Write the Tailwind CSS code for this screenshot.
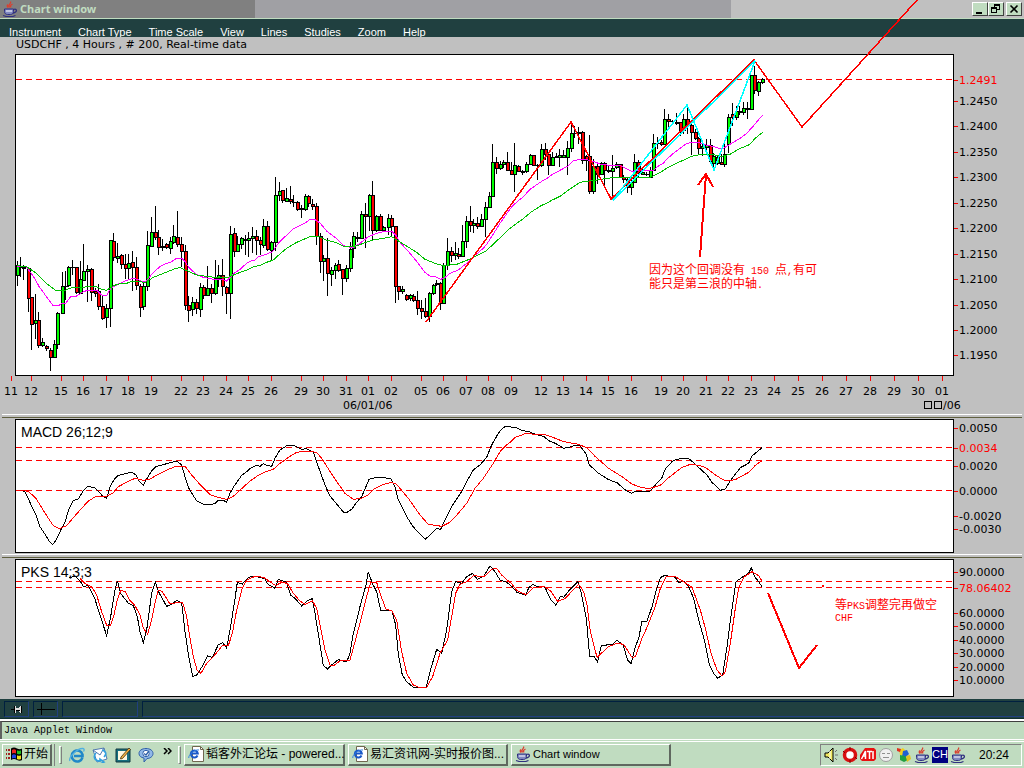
<!DOCTYPE html>
<html lang="zh">
<head>
<meta charset="utf-8">
<title>Chart window</title>
<script src="https://cdn.jsdelivr.net/npm/@tailwindcss/browser@4"></script>
</head>
<body class="flex min-h-screen flex-col overflow-x-hidden bg-[#c0dcc0] font-['Liberation_Sans','Noto_Sans_CJK_SC',sans-serif] text-black">

<svg class="hidden" aria-hidden="true">
  <symbol id="java" viewBox="0 0 16 16">
    <path d="M8.5 0.5c1.5 2-3.5 3-1 6M10.5 3c-2 1-2.5 2-1.500 3.500M6 3.500c-1 1-1 2 0 3" fill="none" stroke="#d84030" stroke-width="1.300"/>
    <path d="M2.500 8h9v2.500c0 2-1.500 3-3 3h-3c-1.500 0-3-1-3-3z" fill="#8088c0" stroke="#303080" stroke-width="1"/>
    <path d="M4 10h6" stroke="#fff" stroke-width="1"/>
    <path d="M11.500 8.500c4-1.500 4 3-0.500 3.500M1 14.500c4 1.500 9 1.500 12.500 0" fill="none" stroke="#303080" stroke-width="1.300"/>
  </symbol>
  <symbol id="ie" viewBox="0 0 16 16">
    <path d="M13.500 10.500A5.500 5.500 0 1 1 13.500 7.500V9H5" fill="none" stroke="#2088c8" stroke-width="2.600"/>
    <path d="M1 14C-1 11 8 1 14 1.500c2 .5 1 2 .5 3" fill="none" stroke="#50b0e0" stroke-width="1.300"/>
  </symbol>
  <symbol id="iepage" viewBox="0 0 16 16">
    <path d="M4.500.5h8l3 3v12h-11z" fill="#fff" stroke="#706850"/>
    <path d="M12.500.5v3h3" fill="none" stroke="#706850"/>
    <path d="M9.500 9.500A3.500 3.500 0 1 1 9.800 7.500H3.500" fill="none" stroke="#1858c8" stroke-width="2"/>
    <path d="M.8 12C0 9 7 3 11 4" fill="none" stroke="#3080e0"/>
  </symbol>
</svg>

<header class="flex h-[19px] items-center border-b border-[#c0dcc0] bg-[linear-gradient(90deg,#808080_24.9%,#a0a0a4_24.9%,#a0a0a4_71.4%,#c0c0c0_71.4%)] pl-[2px] pr-[2px]">
  <svg class="size-4" aria-hidden="true"><use href="#java"/></svg>
  <h1 class="ml-[2px] flex-1 font-['Noto_Sans'] text-[11px] font-bold leading-4 text-[#c0dcc0]">Chart window</h1>
  <div class="flex">
    <button aria-label="Minimize" class="h-[14px] w-4 border border-t-white border-l-white border-r-[#404040] border-b-[#404040] bg-[#c0dcc0]"><svg viewBox="0 0 14 12" class="block h-3 w-[14px]"><path d="M3 9h6v2H3z"/></svg></button>
    <button aria-label="Restore" class="h-[14px] w-4 border border-t-white border-l-white border-r-[#404040] border-b-[#404040] bg-[#c0dcc0]"><svg viewBox="0 0 14 12" class="block h-3 w-[14px]" fill="none" stroke="#000" shape-rendering="crispEdges"><path d="M5.500 4V1.500h5v5H8M5 2.500h6M2.500 4.500h5v5h-5zM2 5.500h6"/></svg></button>
    <button aria-label="Close" class="ml-[2px] h-[14px] w-4 border border-t-white border-l-white border-r-[#404040] border-b-[#404040] bg-[#c0dcc0]"><svg viewBox="0 0 14 12" class="block h-3 w-[14px]"><path d="M3.500 2.500l7 7M10.500 2.500l-7 7" stroke="#000" stroke-width="1.600"/></svg></button>
  </div>
</header>

<nav class="flex h-[18px] items-end gap-[17px] overflow-hidden bg-[#204040] px-[9px] text-[11px] leading-[9px] text-white">
  <button>Instrument</button><button>Chart Type</button><button>Time Scale</button><button>View</button><button>Lines</button><button>Studies</button><button>Zoom</button><button>Help</button>
</nav>

<main class="relative bg-[#c0c0c0] font-['DejaVu_Sans',sans-serif]">
  <svg id="price" class="relative block h-auto w-full overflow-visible text-[11px]" viewBox="0 37 1024 377" role="img" aria-label="USDCHF price chart">
    <text x="16" y="48">USDCHF , 4 Hours , # 200, Real-time data</text>
    <rect x="15.500" y="54.500" width="938" height="321" fill="#fff" stroke="#000" shape-rendering="crispEdges"/>
    <path d="M16 79.500h937" stroke="#f00" stroke-dasharray="6 4" shape-rendering="crispEdges"/>
    <g id="candles" shape-rendering="crispEdges"></g>
    <g fill="none" shape-rendering="crispEdges">
      <g transform="translate(0 170) scale(.33333)">
        <polyline vector-effect="non-scaling-stroke" stroke="#f0f" points="51,289 78,289 84,297 104,325 118,351 132,370 160,408 173,408 186,401 196,401 212,380 230,378 250,365 263,361 290,361 305,375 320,376 333,354 353,343 380,331 398,325 412,328 430,336 440,333 460,307 480,290 500,280 512,277 530,265 545,265 556,276 566,292 590,314 610,322 634,327 670,328 679,334 690,322 702,310 720,298 740,280 750,274"/>
        <polyline vector-effect="non-scaling-stroke" stroke="#00c000" points="51,287 80,290 90,297 108,309 140,341 167,361 195,361 212,354 240,354 263,349 288,349 305,358 320,361 340,347 360,341 380,340 395,334 420,335 435,338 460,322 490,310 520,298 540,292 556,300 590,315 620,319 660,324 680,324 705,313 740,300 750,295"/>
      </g>
      <g transform="translate(250 160) scale(.33333)">
        <polyline vector-effect="non-scaling-stroke" stroke="#f0f" points="0,304 15,300 25,290 40,286 60,278 68,275 85,250 100,235 130,206 150,197 167,188 180,178 194,178 210,189 230,213 260,236 285,260 310,262 330,250 355,230 380,220 405,214 425,214 437,225 450,247 480,280 500,304 525,337 540,348 555,349 572,358 583,354 600,340 625,330 650,310 670,290 700,265 712,250 730,222 750,190 778,150"/>
        <polyline vector-effect="non-scaling-stroke" stroke="#00c000" points="0,325 15,319 30,317 50,307 70,300 85,286 110,265 140,247 180,230 205,229 230,241 260,248 285,261 310,261 340,250 370,240 400,235 425,230 450,246 500,277 525,298 560,312 580,317 620,313 665,295 708,273 740,243 780,205"/>
      </g>
      <g transform="translate(480 50) scale(.33333)">
        <polyline vector-effect="non-scaling-stroke" stroke="#f0f" points="88,480 100,465 130,440 150,418 185,394 200,386 220,371 240,361 262,349 280,333 297,328 315,328 340,334 360,342 380,345 420,346 435,354 455,364 475,361 505,363 520,361 535,348 550,340 560,328 580,310 600,295 620,280 640,277 655,277 680,286 700,289 725,298 745,286 760,277 780,265 800,250 820,228 848,195"/>
        <polyline vector-effect="non-scaling-stroke" stroke="#00c000" points="90,535 127,508 155,485 185,466 200,460 215,451 240,439 260,424 300,397 320,394 350,390 380,385 400,383 440,382 510,382 545,365 560,355 600,335 635,319 660,314 700,314 725,319 750,313 775,298 810,283 825,265 848,247"/>
      </g>
    </g>
    <g fill="none" stroke-width="1.500" shape-rendering="crispEdges">
      <path d="M426 322L571 122L611 199L754 60L802 127L918-1" stroke="#f00"/>
      <path d="M613 200L687 105L714 170L755 61L613 200" stroke="#0ff"/>
      <path d="M700 257L706 174M698 185L706 174L713 187" stroke="#f00" stroke-width="2"/>
    </g>
    <g class="fill-[#f00] font-['Noto_Sans_CJK_SC',sans-serif] text-[12px]">
      <text x="649" y="274" xml:space="preserve">因为这个回调没有<tspan class="font-['Liberation_Mono'] text-[10px]"> 150 </tspan>点<tspan class="font-['Liberation_Mono'] text-[10px]">,</tspan>有可</text>
      <text x="649" y="288">能只是第三浪的中轴<tspan class="font-['Liberation_Mono'] text-[10px]">.</tspan></text>
    </g>
    <text x="343" y="409">06/01/06</text>
    <g fill="none" stroke="#000" shape-rendering="crispEdges"><path d="M924.500 401.500h7v7h-7zM934.500 401.500h7v7h-7z"/></g>
    <text x="943" y="409">/06</text>
  </svg>

  <div role="separator" class="mx-[2px] h-1 border-t border-b border-t-white border-b-[#606040]"></div>

  <svg id="macd" class="block h-auto w-full text-[11px]" viewBox="0 418 1024 136" role="img" aria-label="MACD">
    <rect x="15.500" y="419.500" width="938" height="133" fill="#fff" stroke="#000" shape-rendering="crispEdges"/>
    <path d="M16 447.500h937M16 460.500h937M16 490.500h937" stroke="#f00" stroke-dasharray="6 4" shape-rendering="crispEdges"/>
    <text x="21" y="437" class="font-['Liberation_Sans'] text-[14px]">MACD 26;12;9</text>
    <g fill="none" shape-rendering="crispEdges">
      <g transform="translate(0 370) scale(.33333)">
        <polyline vector-effect="non-scaling-stroke" stroke="#000" points="48,361 65,361 74,365 85,385 95,410 110,440 120,470 135,493 150,517 158,523 165,515 175,497 185,474 195,457 205,422 220,392 235,387 250,362 263,349 285,354 300,368 308,379 320,385 330,350 345,325 355,316 375,311 395,306 408,315 415,330 430,346 440,327 455,303 468,290 500,281 530,273 545,285 555,320 565,352 590,393 610,402 630,405 645,400 655,391 670,391 680,397 690,370 700,352 725,316 740,305 750,295 770,286 780,289 790,281 800,286 815,289 825,265 840,240 862,226 885,228 905,238 920,236 940,247 955,290 975,345 990,378 1010,402 1030,426 1040,428 1055,418 1070,397 1085,380 1100,345 1107,328 1130,322 1172,325 1185,350 1195,390 1220,440 1240,471 1276,508 1310,475 1322,478 1335,450 1355,410 1385,365 1400,335 1420,300 1440,285 1460,262 1475,225 1495,190 1510,172 1525,168 1536,172"/>
        <polyline vector-effect="non-scaling-stroke" stroke="#f00" points="48,361 65,361 85,364 108,385 125,413 145,445 160,467 178,476 200,467 220,443 245,415 265,393 285,381 320,379 340,368 355,350 385,334 405,325 430,331 450,327 475,313 500,300 530,288 555,289 575,315 605,349 630,374 655,382 680,388 700,379 725,356 750,333 775,316 800,304 820,298 835,284 870,259 890,247 920,243 950,247 965,265 1000,320 1035,370 1060,388 1085,385 1105,375 1120,358 1150,343 1175,337 1190,343 1225,385 1260,435 1285,463 1325,469 1350,457 1375,430 1400,400 1425,355 1450,325 1480,280 1500,245 1520,225 1536,212"/>
      </g>
      <g transform="translate(512 370) scale(.33333)">
        <polyline vector-effect="non-scaling-stroke" stroke="#000" points="0,172 15,174 30,181 50,185 75,194 95,199 110,212 130,220 155,235 175,231 190,225 205,228 222,252 232,285 260,310 290,329 315,338 340,360 358,370 370,364 415,363 430,345 450,323 460,297 480,275 490,269 510,265 530,266 545,278 565,297 585,315 600,337 625,361 640,357 655,332 685,293 710,280 720,258 750,233"/>
        <polyline vector-effect="non-scaling-stroke" stroke="#f00" points="0,212 10,202 40,191 100,194 130,205 155,215 200,223 225,234 250,260 290,295 330,320 360,342 380,350 410,356 445,346 470,323 510,292 535,283 560,286 580,292 610,315 640,333 670,329 710,307 730,286 750,272"/>
      </g>
    </g>
  </svg>

  <div role="separator" class="mx-[2px] h-1 border-t border-b border-t-white border-b-[#606040]"></div>

  <svg id="pks" class="block h-auto w-full text-[11px]" viewBox="0 558 1024 141" role="img" aria-label="PKS">
    <rect x="15.500" y="559.500" width="938" height="137" fill="#fff" stroke="#000" shape-rendering="crispEdges"/>
    <path d="M16 581.500h937M16 587.500h937" stroke="#f00" stroke-dasharray="6 4" shape-rendering="crispEdges"/>
    <text x="21" y="577" class="font-['Liberation_Sans'] text-[14px]">PKS 14;3;3</text>
    <g fill="none" shape-rendering="crispEdges">
      <g transform="translate(0 550) scale(.33333)">
        <polyline vector-effect="non-scaling-stroke" stroke="#000" points="208,84 225,78 240,92 250,110 265,106 285,148 300,195 320,257 332,200 345,120 352,92 362,130 385,160 400,167 412,200 420,245 430,278 440,240 455,130 466,97 478,130 500,169 515,163 530,151 545,158 555,245 567,325 578,380 590,375 605,352 623,318 637,322 655,284 668,278 680,294 690,240 703,160 712,97 727,102 745,82 765,79 795,86 803,102 825,115 835,88 860,97 872,135 885,145 905,168 922,152 937,146 945,190 957,265 970,347 983,357 995,345 1015,329 1040,336 1050,310 1060,250 1080,170 1098,105 1105,65 1117,100 1130,125 1142,181 1175,180 1187,225 1195,315 1207,375 1220,395 1242,414 1278,414 1290,365 1310,298 1325,310 1340,240 1355,125 1367,95 1385,100 1400,80 1418,70 1432,88 1452,78 1470,48 1485,65 1500,90 1520,97 1536,110"/>
        <polyline vector-effect="non-scaling-stroke" stroke="#f00" points="240,85 255,100 275,110 290,135 305,185 320,226 332,226 342,195 352,150 362,122 375,124 390,152 405,167 420,195 430,235 443,252 455,210 465,160 475,120 487,125 510,162 530,158 548,158 560,200 570,265 580,320 592,362 603,370 620,340 640,320 667,287 685,287 697,250 710,180 725,120 740,90 765,79 790,82 810,95 827,107 845,97 862,100 880,130 900,153 915,163 937,152 950,175 962,235 975,300 990,345 1000,348 1020,333 1050,330 1065,275 1085,200 1100,140 1112,97 1130,97 1142,135 1158,178 1175,182 1190,210 1205,305 1220,370 1240,405 1262,414 1280,412 1298,380 1320,310 1343,270 1355,200 1367,130 1380,103 1400,95 1420,77 1452,80 1475,58 1490,55 1505,75 1525,93 1536,102"/>
      </g>
      <g transform="translate(512 550) scale(.33333)">
        <polyline vector-effect="non-scaling-stroke" stroke="#000" points="0,110 15,127 42,136 50,113 63,103 75,109 98,110 115,147 132,166 145,139 155,142 175,117 198,95 208,130 223,205 233,320 245,318 257,336 268,286 300,284 315,271 333,284 347,331 357,341 370,290 380,265 390,214 405,214 420,170 433,120 445,83 458,76 490,82 500,98 515,94 530,110 545,145 560,210 577,270 592,345 605,370 617,385 632,375 645,290 658,190 672,95 690,82 710,70 718,53 728,80 740,95 750,110"/>
        <polyline vector-effect="non-scaling-stroke" stroke="#f00" points="0,102 15,122 42,134 65,113 95,109 115,122 137,154 160,145 185,118 200,103 215,125 225,165 235,245 255,322 270,308 290,290 315,280 335,283 360,322 370,320 390,265 405,232 428,175 445,115 462,80 490,80 515,95 540,112 565,180 580,235 597,310 615,360 630,378 640,365 655,280 670,175 680,115 695,82 720,65 740,77 750,93"/>
      </g>
      <path d="M768 593L799 668L817 645M822 586h2" stroke="#f00" stroke-width="2"/>
    </g>
    <g class="fill-[#f00] font-['Noto_Sans_CJK_SC',sans-serif] text-[12px]">
      <text x="835" y="609">等<tspan class="font-['Liberation_Mono'] text-[10px]">PKS</tspan>调整完再做空</text>
      <text x="835" y="621" class="font-['Liberation_Mono'] text-[10px]">CHF</text>
    </g>
  </svg>
</main>

<div class="flex h-5 gap-1 border-b border-[#103030] bg-[#204040] pl-1 pt-[2px] pb-[1px]" role="toolbar" aria-label="Chart tools">
  <button aria-label="Pin" class="flex h-4 w-[25px] items-center justify-center border border-t-[#002040] border-l-[#002040] border-r-[#204080] border-b-[#204080]"><svg viewBox="0 0 12 9" class="h-[9px] w-3" shape-rendering="crispEdges"><path d="M0 4h4v1H0zM3 1h1v7H3zM10 1h1v7h-1z"/><path d="M4 1h1v7H4zM5 3h3v3H5zM8 2h1v5H8zM9 1h1v7H9z" fill="#ddd"/><path d="M5 5h4v1H5z"/></svg></button>
  <button aria-label="Crosshair" class="flex h-4 w-[25px] items-center justify-center border border-t-[#002040] border-l-[#002040] border-r-[#204080] border-b-[#204080]"><svg viewBox="0 0 18 12" class="h-3 w-[18px]" shape-rendering="crispEdges"><path d="M0 6h18v1H0zM4 0h1v12H4z"/></svg></button>
  <div class="h-4 w-[76px] border border-t-[#002040] border-l-[#002040] border-r-[#204080] border-b-[#204080]"></div>
  <div class="h-4 flex-1 border border-r-0 border-t-[#002040] border-l-[#002040] border-b-[#204080]"></div>
</div>

<div role="status" class="mt-[2px] h-[18px] border-t border-l-2 border-t-[#404040] border-l-[#606060] pl-[2px] font-['Liberation_Mono'] text-[10px] leading-[18px] shadow-[0_-2px_0_#fff]">Java Applet Window</div>

<footer class="flex h-7 items-center border-t border-white pl-[2px] pr-[2px] pt-[2px] text-[12px] shadow-[inset_0_1px_0_#c0dcc0,inset_0_2px_0_#fff]">
  <button class="flex h-[22px] w-[50px] items-center gap-[2px] border border-t-white border-l-white border-r-2 border-b-2 border-r-[#606860] border-b-[#606860] pl-[3px]">
    <svg viewBox="0 0 16 14" class="h-[14px] w-4 shrink-0" aria-hidden="true"><path d="M5 1.500q3-2 6 0 3 1.500 5 0V13q-2 1.500-5 0-3-2-6 0z"/><path d="M6 3q2-1.500 4 0v3.500q-2-1-4 0z" fill="#f02020"/><path d="M11 3.300q2 1 4 0v3.500q-2 1-4 0z" fill="#20c020"/><path d="M6 8q2-1.500 4 0v3.500q-2-1-4 0z" fill="#2040e0"/><path d="M11 8.200q2 1 4 0V12q-2 1-4 0z" fill="#f0e020"/><path d="M0 2h1v2H0zM2 2h2v2H2zM0 6h1v2H0zM2 6h2v2H2zM0 10h1v2H0zM2 10h2v2H2z" fill="#a02020"/></svg>
    <span class="whitespace-nowrap">开始</span>
  </button>
  <div class="ml-[2px] h-[22px] w-px bg-[#808080]"></div>
  <div class="ml-1 h-[18px] w-[3px] border border-t-white border-l-white border-r-[#808080] border-b-[#808080]"></div>
  <div class="ml-[7px] flex items-center gap-[7px]">
    <a href="#" aria-label="Internet Explorer"><svg class="size-4"><use href="#ie"/></svg></a>
    <a href="#" aria-label="Outlook Express"><svg viewBox="0 0 16 16" class="size-4"><path d="M1 3l11-2 3 11-10 3z" fill="#fff" stroke="#5078b0"/><path d="M1 3l7 5 4-7" fill="none" stroke="#5078b0"/><path d="M4 6c-3 3-2 8 4 8v-2l4 3-4 2M12 10c3-3 2-6-2-7" fill="none" stroke="#30a0e0" stroke-width="1.600"/></svg></a>
    <a href="#" aria-label="Show desktop"><svg viewBox="0 0 16 16" class="size-4"><path d="M1 2h14v13H1z" fill="#187080" stroke="#103840"/><path d="M3 4h9v9H3z" fill="#fff8e0"/><path d="M6 10l8-9 1.500 1.500-8 9-2 .5z" fill="#f0b040" stroke="#403010" stroke-width=".8"/></svg></a>
    <a href="#" aria-label="Messenger"><svg viewBox="0 0 16 16" class="size-4"><path d="M8 1.500c4 0 7 2 7 5s-3 5-6 5l-3 3.500V11c-3-.5-5-2-5-4.500 0-3 3-5 7-5z" fill="#90b8e8" stroke="#3060a8"/><circle cx="8" cy="6.500" r="3.200" fill="#fff" stroke="#3060a8"/><path d="M6 6.500l2 1.500 3-4" fill="none" stroke="#3060a8" stroke-width="1.300"/></svg></a>
  </div>
  <button aria-label="More" class="ml-[9px] h-[22px] pb-[6px]"><svg viewBox="0 0 9 7" class="h-[7px] w-[9px]"><path d="M1 0l3 3-3 3M5 0l3 3-3 3" fill="none" stroke="#000" stroke-width="1.500"/></svg></button>
  <div class="ml-[6px] mr-[3px] h-[18px] w-[3px] border border-t-white border-l-white border-r-[#808080] border-b-[#808080]"></div>
  <div class="flex min-w-0 flex-1 gap-[3px]">
    <button class="flex h-[22px] w-[161px] items-center gap-[2px] border border-t-white border-l-white border-r-2 border-b-2 border-r-[#606860] border-b-[#606860] pl-[3px]"><svg class="size-4 shrink-0"><use href="#iepage"/></svg><span class="whitespace-nowrap">韬客外汇论坛 - powered...</span></button>
    <button class="flex h-[22px] w-[160px] items-center gap-[2px] border border-t-white border-l-white border-r-2 border-b-2 border-r-[#606860] border-b-[#606860] pl-[3px]"><svg class="size-4 shrink-0"><use href="#iepage"/></svg><span class="whitespace-nowrap">易汇资讯网-实时报价图...</span></button>
    <button class="flex h-[22px] w-[160px] items-center gap-[2px] border border-t-white border-l-white border-r-2 border-b-2 border-r-[#606860] border-b-[#606860] pl-[3px]"><svg class="size-4 shrink-0"><use href="#java"/></svg><span class="whitespace-nowrap text-[11px]">Chart window</span></button>
  </div>
  <div class="flex h-[22px] w-[202px] items-center gap-[2px] border border-t-[#808080] border-l-[#808080] border-r-white border-b-white pl-[3px]">
    <svg viewBox="0 0 16 16" class="size-4"><path d="M1 6h3l5-5v14l-5-5H1z" fill="#f0e860" stroke="#000"/><path d="M6 4v8" stroke="#fff"/><path d="M11 5l2-2M11 8h3M11 11l2 2" stroke="#707070"/></svg>
    <svg viewBox="0 0 16 16" class="size-4"><circle cx="8" cy="8" r="5.500" fill="#fff" stroke="#d81010" stroke-width="3.500"/><path d="M8 0v3M8 13v3M1 4l2 2M15 12l-2-2" stroke="#800000"/></svg>
    <svg viewBox="0 0 16 16" class="size-4"><path d="M5 1h9l2 2v9l-2 2H2l-2-2V8z" fill="#e81010"/><path d="M1.500 12l4-8v8M3 9h3M7 4.500h5M9.500 4.500V12M13 4v8" fill="none" stroke="#fff" stroke-width="1.500"/></svg>
    <svg viewBox="0 0 16 16" class="size-4"><circle cx="8" cy="8" r="6.500" fill="#f0f0f0" stroke="#a0a0a0"/><path d="M4 6.500h3M9 6.500h3M5 10.500h6" stroke="#909090"/></svg>
    <svg viewBox="0 0 16 16" class="size-4"><path d="M3 3l4-2 3 3-2 5-4-1z" fill="#f0d020"/><path d="M1 1l4 1-1 3-3-1z" fill="#e03020"/><path d="M7 4l4-1 2 4-4 4-3-1z" fill="#2060d0"/><path d="M4 8l5 1 3 4-4 2-4-2z" fill="#20a040"/><path d="M10 9l4-1 1 4-4 3z" fill="#e0c020"/></svg>
    <svg class="size-4"><use href="#java"/></svg>
    <span class="flex size-4 items-center justify-center bg-[#000080] text-[11px] text-white">CH</span>
    <svg class="size-4"><use href="#java"/></svg>
    <time class="ml-auto mr-3 text-[12px]">20:24</time>
  </div>
</footer>

<script>
const NS = 'http://www.w3.org/2000/svg';
function add(parent, name, attrs, text) {
  const e = document.createElementNS(NS, name);
  for (const k in attrs) e.setAttribute(k, attrs[k]);
  if (text) e.textContent = text;
  parent.appendChild(e);
}
// Candles in thirds of a unit, relative to each block's origin: x high low bodyTop bodyBottom colour
const blocks = [
 [0,170,`51 273 348 286 316 g,61 261 321 292 292 g,70 286 330 292 295 r,84 292 426 295 385 r,95 382 540 382 463 r,106 372 507 451 460 g,116 426 534 451 527 r,128 504 531 517 527 g,140 525 543 529 535 r,152 534 603 541 562 r,162 510 563 523 562 g,173 426 537 430 523 g,186 306 430 349 430 g,196 303 390 349 349 g,206 288 353 292 346 g,217 272 316 292 292 g,230 292 373 292 367 r,241 273 373 328 370 g,251 222 333 304 330 g,263 285 396 298 304 g,274 294 393 298 367 r,286 354 381 364 370 r,296 342 420 364 409 r,308 378 450 409 445 r,320 402 474 415 442 g,332 211 471 211 415 g,341 189 273 214 262 r,353 219 279 259 265 g,364 253 297 256 283 r,376 252 327 283 295 r,386 252 328 280 295 g,398 243 363 277 292 r,409 262 360 292 346 r,421 342 441 349 412 r,431 337 420 349 409 g,443 183 363 226 349 g,455 141 230 187 229 g,466 108 210 187 202 r,476 180 255 202 232 r,488 208 245 229 232 g,500 219 238 223 232 r,512 202 252 214 235 g,521 165 222 199 217 g,532 123 231 202 223 r,545 201 291 223 244 r,557 225 420 244 406 r,566 378 456 406 421 r,578 381 438 397 418 g,590 388 432 397 415 r,602 339 441 352 418 g,611 345 387 352 376 r,622 288 376 355 376 g,634 342 399 355 370 r,647 270 375 325 370 g,656 285 352 316 325 g,668 267 380 316 349 r,679 348 432 352 370 r,691 168 447 193 370 g,702 174 261 190 244 r,713 198 247 223 244 g,725 202 238 205 223 g,737 195 255 208 210 g,746 186 261 205 211 g,757 171 249 199 205 g,769 180 255 199 211 r`],
 [250,160,`31 231 285 241 253 r,41 177 264 199 256 g,53 184 275 199 268 r,65 243 300 247 271 g,77 51 274 106 247 g,87 66 123 94 106 g,98 90 130 91 121 r,110 84 126 115 124 g,122 78 133 118 124 r,131 105 142 127 127 g,143 123 153 127 148 r,154 135 174 145 148 g,167 102 154 109 148 g,176 105 142 109 130 r,188 118 150 133 139 r,200 129 255 139 229 r,211 220 339 229 304 r,221 286 363 295 304 g,233 235 408 295 340 r,245 321 378 331 343 g,256 309 357 316 331 g,265 300 338 313 331 r,277 328 405 328 355 r,290 316 366 325 355 g,302 247 336 268 325 g,311 216 294 229 265 g,323 217 247 232 235 g,335 153 235 163 235 g,347 129 264 163 169 r,357 102 213 106 169 g,368 63 241 106 211 r,380 165 216 169 211 g,391 162 214 169 211 r,401 198 217 202 211 g,414 162 225 175 202 g,425 165 229 175 199 r,437 199 429 199 379 r,446 378 420 379 394 r,458 378 402 388 394 g,470 402 423 406 418 r,482 403 423 406 415 g,491 402 427 409 421 r,503 393 465 421 445 r,515 421 477 445 454 r,527 415 474 454 469 r,537 397 486 400 469 g,549 372 406 376 400 g,560 360 378 370 373 g,571 366 450 370 430 r,581 310 432 316 430 g,593 234 330 274 316 g,605 262 306 274 286 r,617 247 300 280 286 g,626 265 298 283 289 r,638 195 292 244 289 g,650 169 264 184 244 g,661 139 216 184 196 r,671 177 219 190 196 g,683 171 209 190 199 r,695 163 201 178 199 g,707 126 231 142 178 g,717 97 145 109 142 g`],
 [480,50,`38 282 442 337 439 g,49 321 372 337 355 r,60 333 360 343 355 g,71 330 355 337 343 g,82 308 360 337 361 r,94 337 375 361 373 r,104 279 427 346 373 g,116 345 366 349 364 r,127 360 375 364 367 g,140 336 371 343 364 g,151 312 345 316 343 g,161 315 350 316 346 r,173 342 392 345 345 g,185 282 351 298 345 g,195 279 330 298 313 r,206 313 375 313 346 r,218 306 348 322 346 g,230 309 325 319 322 g,239 297 352 316 322 g,251 300 325 316 322 g,263 273 375 295 322 g,275 225 308 250 295 g,284 230 264 250 250 g,296 232 283 247 250 g,307 243 342 247 331 r,319 315 364 319 331 r,329 255 432 319 424 r,341 327 432 349 424 g,353 340 402 349 373 r,364 336 375 340 373 g,374 336 405 340 361 r,386 345 370 361 364 g,398 315 450 355 364 g,410 336 357 343 352 g,420 342 385 343 382 r,431 375 400 382 388 r,443 382 430 388 412 r,455 378 435 397 412 g,464 312 400 337 397 g,475 330 382 337 367 r,488 358 375 367 373 g,500 366 380 373 373 g,510 352 384 361 382 g,521 252 363 280 361 g,532 262 298 280 280 g,544 270 290 277 283 r,554 177 285 208 283 g,566 192 232 208 214 r,578 210 222 214 214 g,590 189 225 217 220 g,600 216 258 217 241 r,611 193 252 208 241 g,622 168 252 208 226 r,634 222 315 226 247 r,645 238 270 247 265 r,656 262 315 265 295 r,668 282 320 290 295 g,680 267 315 286 292 g,690 268 330 286 334 r,700 310 358 319 340 g,712 318 345 322 340 g,725 312 345 337 343 r,734 283 352 313 343 g,746 192 310 202 282 g,757 160 229 193 202 r,769 168 210 184 202 g,779 168 195 184 187 g,791 156 195 175 187 g,802 156 207 175 178 g,815 76 180 76 178 g,824 50 133 76 121 r,836 93 138 97 124 g,848 84 102 88 97 g`]
];
const candles = document.getElementById('candles');
for (const [ox, oy, rows] of blocks) for (const row of rows.split(',')) {
  const p = row.split(' ');
  const x = ox + Math.floor(p[0] / 3);
  const [hi, lo, top, bot] = p.slice(1, 5).map(v => oy + Math.floor(v / 3));
  add(candles, 'rect', {x, y: hi, width: 1, height: lo - hi});
  add(candles, 'rect', {x: x - 1, y: top, width: 4, height: bot - top + 1});
  if (bot - top > 1) add(candles, 'rect', {x, y: top + 1, width: 2, height: bot - top - 1, fill: p[5] === 'g' ? '#00ff00' : '#ff0000'});
}
// Value axes: y, label; the current value is drawn in red
const axes = {
  price: [[80,'1.2491',1],[101,'1.2450'],[126,'1.2400'],[152,'1.2350'],[177,'1.2300'],[203,'1.2250'],[228,'1.2200'],[254,'1.2150'],[279,'1.2100'],[305,'1.2050'],[330,'1.2000'],[355,'1.1950']],
  macd: [[428,'0.0050'],[448,'0.0034',1],[466,'0.0020'],[491,'0.0000'],[516,'-0.0020'],[529,'-0.0030']],
  pks: [[572,'90.0000'],[588,'78.06402',1],[613,'60.0000'],[626,'50.0000'],[640,'40.0000'],[653,'30.0000'],[667,'20.0000'],[680,'10.0000']]
};
for (const id in axes) for (const [y, label, cur] of axes[id]) {
  const svg = document.getElementById(id);
  add(svg, 'rect', {x: 954, y, width: 4, height: 1, fill: '#f00'});
  add(svg, 'text', {x: 959, y: y + 4, fill: cur ? '#f00' : '#000'}, label);
}
// Day axis
const days = [[11,'11'],[31,'12'],[61,'15'],[83,'16'],[106,'17'],[128,'18'],[151,'19'],[181,'22'],[203,'23'],[226,'24'],[248,'25'],[271,'26'],[301,'29'],[323,'30'],[346,'31'],[368,'01'],[391,'02'],[421,'05'],[443,'06'],[466,'07'],[488,'08'],[511,'09'],[541,'12'],[563,'13'],[586,'14'],[608,'15'],[631,'16'],[661,'19'],[683,'20'],[706,'21'],[728,'22'],[751,'23'],[774,'24'],[798,'25'],[822,'26'],[846,'27'],[870,'28'],[894,'29'],[918,'30'],[942,'01']];
const price = document.getElementById('price');
for (const [x, label] of days) {
  add(price, 'rect', {x, y: 376, width: 1, height: 5, fill: '#f00'});
  add(price, 'text', {x, y: 395, 'text-anchor': 'middle'}, label);
}
</script>
</body>
</html>
